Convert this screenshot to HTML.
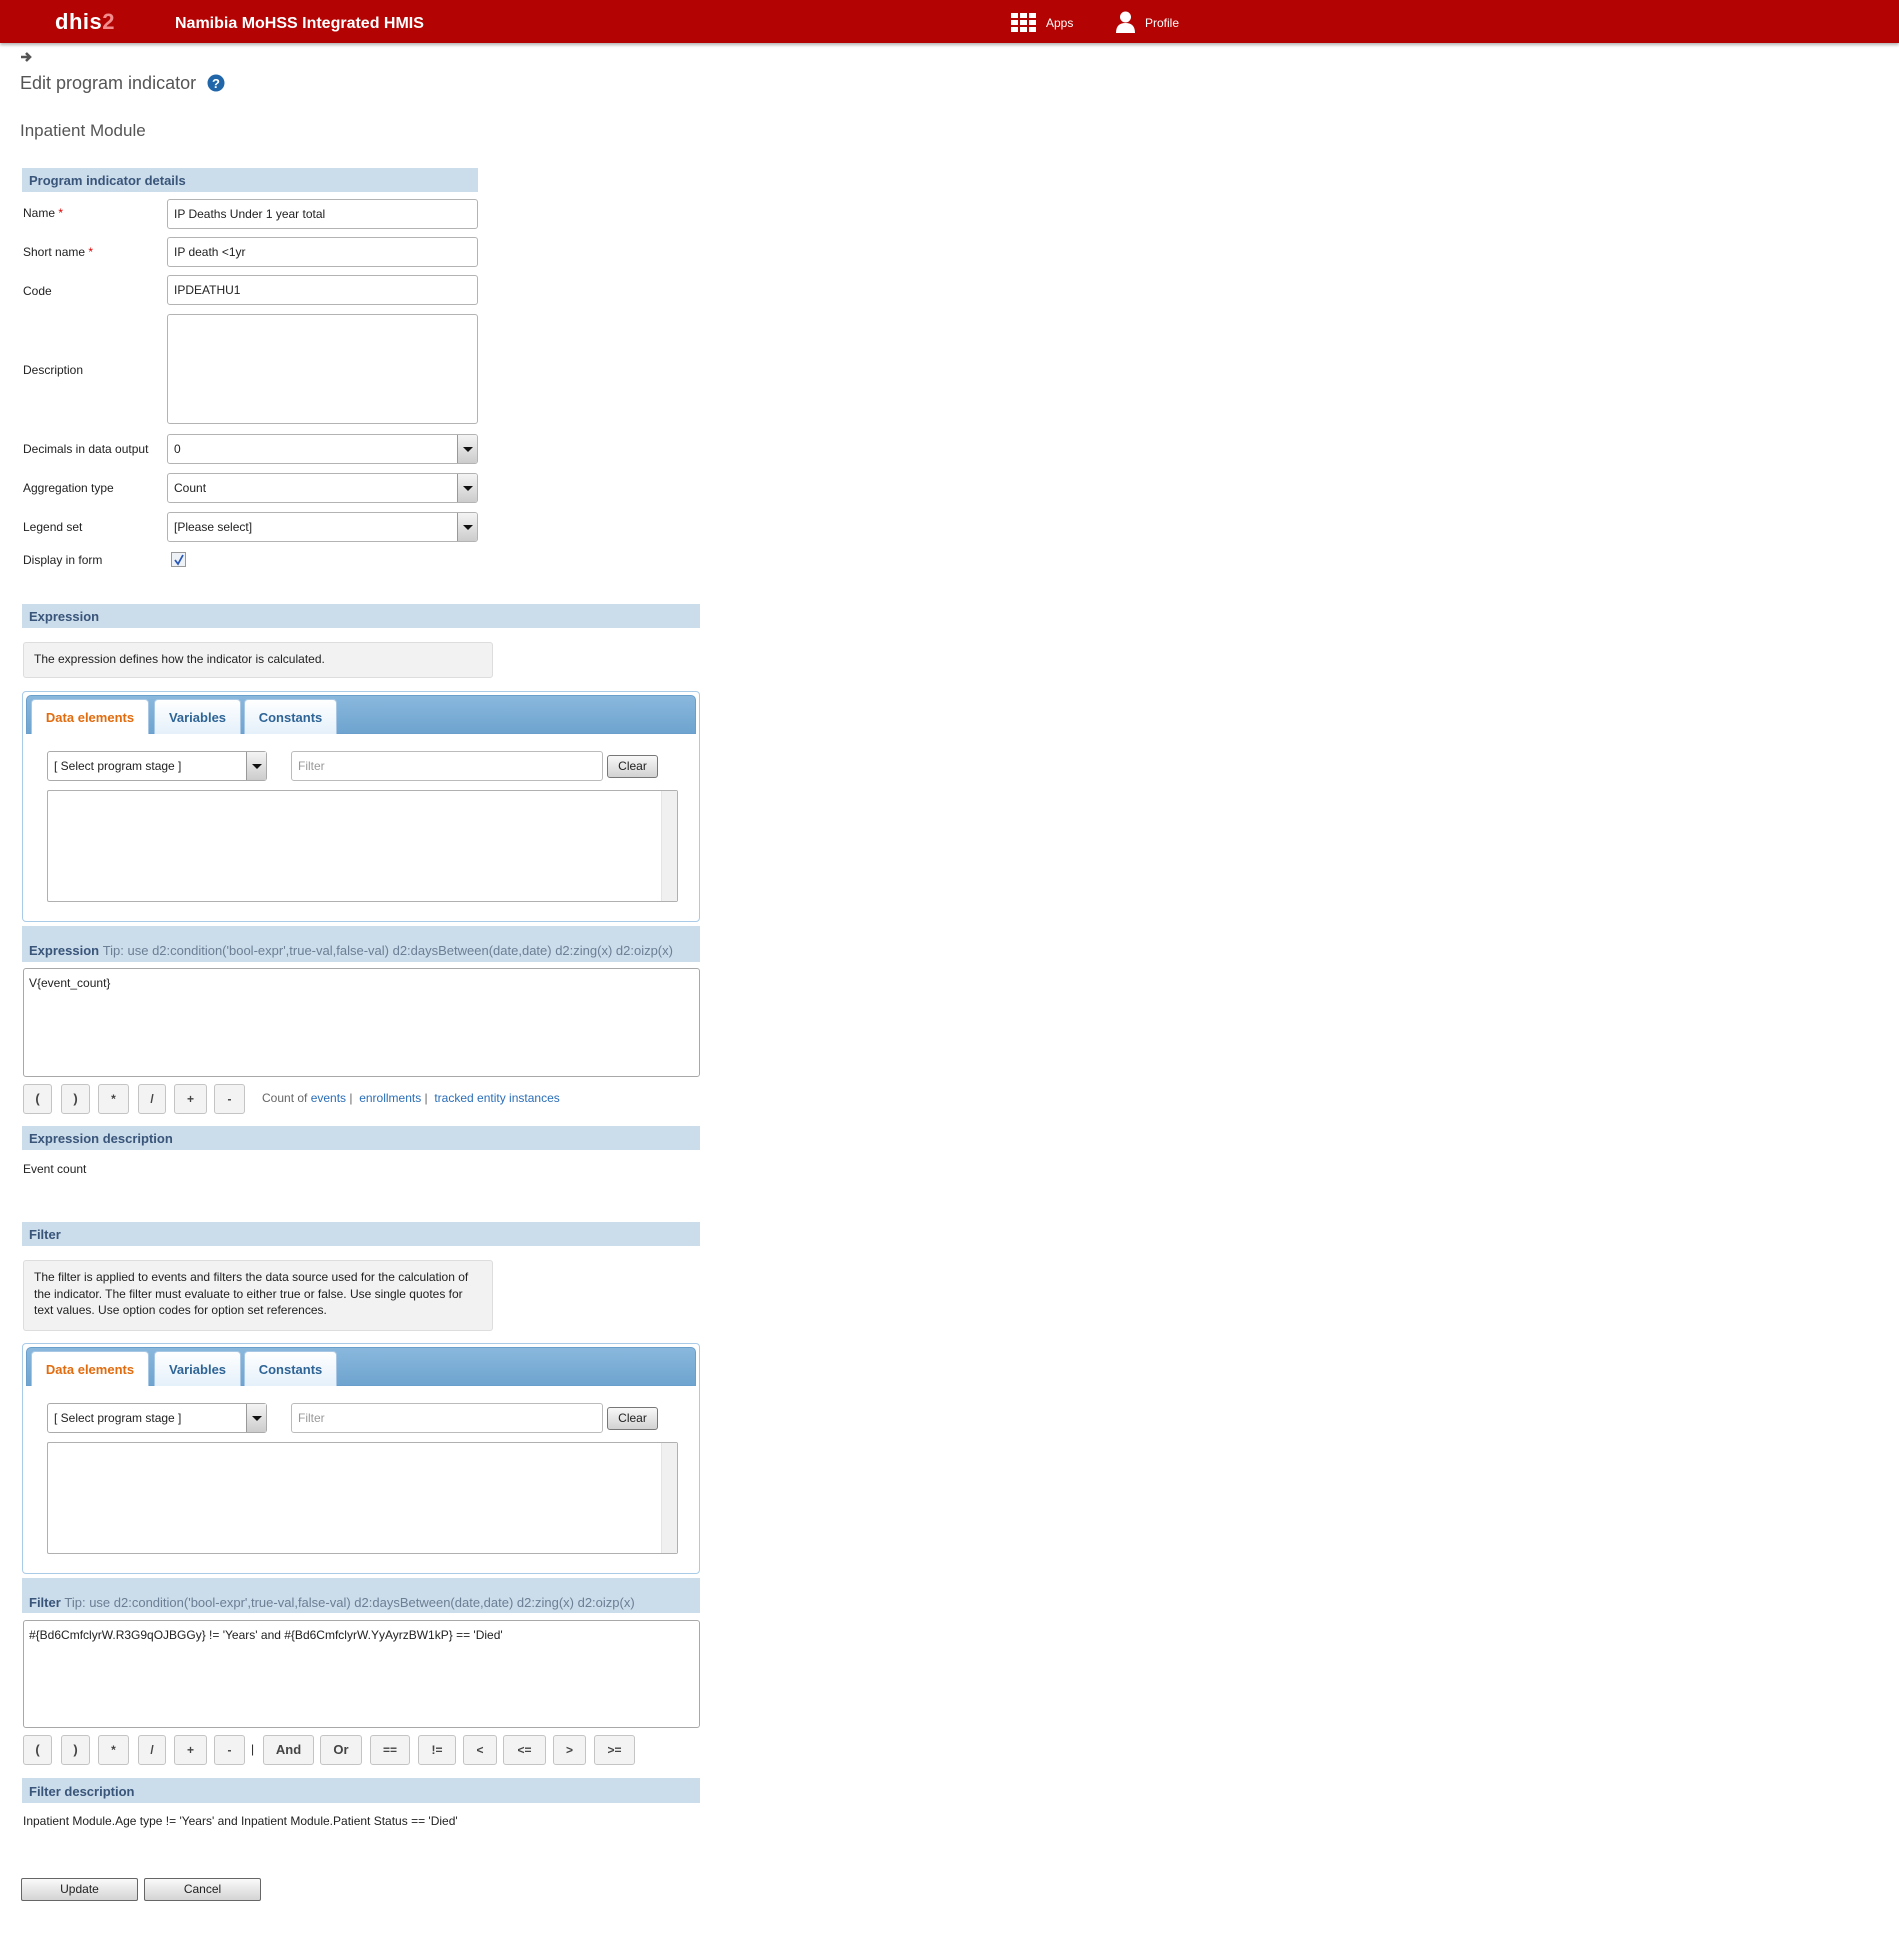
<!DOCTYPE html>
<html><head><meta charset="utf-8"><style>
*{box-sizing:border-box;margin:0;padding:0}
body{width:1899px;height:1934px;background:#fff;font-family:"Liberation Sans",Arial,sans-serif;font-size:12px;color:#222;position:relative;overflow:hidden}
.a{position:absolute}
.hdr{left:0;top:0;width:1899px;height:43px;background:#b40303;box-shadow:0 2px 3px rgba(0,0,0,.3)}
.sec{position:absolute;left:22px;background:#cbdcea;color:#39557a;font-weight:bold;font-size:13px;padding-left:7px}
.lbl{position:absolute;left:23px;font-size:12px}
.inp{position:absolute;left:167px;width:311px;background:#fff;border:1px solid #b3b3b3;border-radius:3px;padding-left:6px;font-size:12px;line-height:28px}
.sel .arr{position:absolute;right:0;top:0;bottom:0;width:20px;border-left:1px solid #999;background:linear-gradient(#f4f4f4,#ccc);border-radius:0 2px 2px 0}
.arr:after{content:"";position:absolute;left:5px;top:12px;border-left:5px solid transparent;border-right:5px solid transparent;border-top:5px solid #111}
.info{position:absolute;left:23px;width:470px;background:#f2f2f2;border:1px solid #ddd;border-radius:3px;padding:8px 10px;font-size:12px;line-height:16.5px;color:#222}
.tabc{position:absolute;left:22px;width:678px;height:231px;border:1px solid #a9cbe8;border-radius:4px;background:#fff}
.tbar{position:absolute;left:3px;top:3px;width:670px;height:39px;border-radius:5px 5px 0 0;background:linear-gradient(#8ab8dd,#6ea4cf);border:1px solid #6b9fcb}
.tab{position:absolute;top:7px;height:35px;background:linear-gradient(#fff,#e4f0fa);border:1px solid #a8c7e4;border-bottom:none;border-radius:4px 4px 0 0;font-weight:bold;font-size:13px;color:#2e6496;text-align:center;line-height:36px}
.tab.on{background:#fff;color:#e26b0e}
.ss{position:absolute;left:24px;top:59px;width:220px;height:30px;border:1px solid #aaa;border-radius:3px;padding-left:6px;line-height:28px}
.flt{position:absolute;left:268px;top:59px;width:312px;height:30px;border:1px solid #bbb;border-radius:3px;padding-left:6px;line-height:28px;color:#999}
.clr{position:absolute;left:584px;top:63px;width:51px;height:23px;border:1px solid #777;border-radius:3px;background:linear-gradient(#f8f8f8,#d2d2d2);text-align:center;line-height:21px}
.lst{position:absolute;left:24px;top:98px;width:631px;height:112px;border:1px solid #b0b0b0;border-radius:2px}
.lst .sb{position:absolute;right:0;top:0;bottom:0;width:16px;background:#f0f0f0;border-left:1px solid #e4e4e4}
.ta{position:absolute;left:23px;width:677px;height:109px;border:1px solid #a8a8a8;border-radius:3px;padding:7px 5px;font-size:12px}
.b{position:absolute;height:30px;border:1px solid #c4c4c4;border-radius:3px;background:#f3f3f3;text-align:center;line-height:28px;font-weight:bold;color:#444;font-size:12px}
.b.big{font-size:13px}
.btn{position:absolute;top:1878px;width:117px;height:23px;border:1px solid #666;border-radius:2px;background:linear-gradient(#fafafa,#d4d4d4);text-align:center;line-height:21px;font-size:12px}
a{color:#2a6eb8;text-decoration:none}
.req{color:#d00}
</style></head><body>
<div class="a hdr"></div>
<div class="a" style="left:55px;top:9px;font-size:22px;font-weight:bold;color:#fff;letter-spacing:.5px">dhis<span style="color:#f28c8c">2</span></div>
<div class="a" style="left:175px;top:15px;font-size:16px;font-weight:bold;color:#fff">Namibia MoHSS Integrated HMIS</div>
<svg class="a" style="left:1011px;top:13px" width="26" height="19"><g fill="#fff"><rect x="0" y="0" width="7" height="5"/><rect x="9" y="0" width="7" height="5"/><rect x="18" y="0" width="7" height="5"/><rect x="0" y="7" width="7" height="5"/><rect x="9" y="7" width="7" height="5"/><rect x="18" y="7" width="7" height="5"/><rect x="0" y="14" width="7" height="5"/><rect x="9" y="14" width="7" height="5"/><rect x="18" y="14" width="7" height="5"/></g></svg>
<div class="a" style="left:1046px;top:16px;color:#fff;font-size:12px">Apps</div>
<svg class="a" style="left:1115px;top:11px" width="21" height="22"><circle cx="10.5" cy="6" r="5.5" fill="#fff"/><path d="M1 22 Q1 12 10.5 12 Q20 12 20 22Z" fill="#fff"/></svg>
<div class="a" style="left:1145px;top:16px;color:#fff;font-size:12px">Profile</div>

<svg class="a" style="left:20px;top:51px" width="14" height="12"><path d="M1 6H10M6 2L10 6L6 10" stroke="#555" stroke-width="2.6" fill="none"/></svg>
<div class="a" style="left:20px;top:73px;font-size:18px;color:#555">Edit program indicator</div>
<svg class="a" style="left:207px;top:74px" width="18" height="18"><circle cx="9" cy="9" r="8.5" fill="#2066a8"/><text x="9" y="14" text-anchor="middle" font-family="Liberation Sans" font-weight="bold" font-size="13" fill="#fff">?</text></svg>
<div class="a" style="left:20px;top:121px;font-size:17px;color:#555">Inpatient Module</div>

<div class="sec" style="top:168px;width:456px;height:24px;line-height:25px">Program indicator details</div>
<div class="lbl" style="top:206px">Name <span class="req">*</span></div>
<div class="inp" style="top:199px;height:30px">IP Deaths Under 1 year total</div>
<div class="lbl" style="top:245px">Short name <span class="req">*</span></div>
<div class="inp" style="top:237px;height:30px">IP death &lt;1yr</div>
<div class="lbl" style="top:284px">Code</div>
<div class="inp" style="top:275px;height:30px">IPDEATHU1</div>
<div class="lbl" style="top:363px">Description</div>
<div class="inp" style="top:314px;height:110px"></div>
<div class="lbl" style="top:442px">Decimals in data output</div>
<div class="inp sel" style="top:434px;height:30px">0<span class="arr"></span></div>
<div class="lbl" style="top:481px">Aggregation type</div>
<div class="inp sel" style="top:473px;height:30px">Count<span class="arr"></span></div>
<div class="lbl" style="top:520px">Legend set</div>
<div class="inp sel" style="top:512px;height:30px">[Please select]<span class="arr"></span></div>
<div class="lbl" style="top:553px">Display in form</div>
<div class="a" style="left:171px;top:552px;width:15px;height:15px;border:1px solid #999;background:#eef2f7"><svg width="13" height="13" style="position:absolute;left:0;top:0"><path d="M3 7L6 11L11 2" stroke="#2a58b8" stroke-width="1.8" fill="none"/></svg></div>

<div class="sec" style="top:604px;width:678px;height:24px;line-height:25px">Expression</div>
<div class="info" style="top:642px;height:36px">The expression defines how the indicator is calculated.</div>
<div class="tabc" style="top:691px">
 <div class="tbar"></div>
 <div class="tab on" style="left:8px;width:118px">Data elements</div>
 <div class="tab" style="left:131px;width:87px">Variables</div>
 <div class="tab" style="left:221px;width:93px">Constants</div>
 <div class="ss">[ Select program stage ]<span class="arr" style="position:absolute;right:0;top:0;bottom:0;width:20px;border-left:1px solid #999;background:linear-gradient(#f4f4f4,#ccc)"></span></div>
 <div class="flt">Filter</div>
 <div class="clr">Clear</div>
 <div class="lst"><div class="sb"></div></div>
</div>
<div class="sec" style="top:926px;width:678px;height:36px;padding-top:17px;font-size:13px">Expression <span style="font-weight:normal;color:#6b7f95">Tip: use d2:condition('bool-expr',true-val,false-val) d2:daysBetween(date,date) d2:zing(x) d2:oizp(x)</span></div>
<div class="ta" style="top:968px">V{event_count}</div>
<div class="b big" style="left:23px;top:1084px;width:29px">(</div>
<div class="b big" style="left:61px;top:1084px;width:29px">)</div>
<div class="b" style="left:98px;top:1084px;width:31px">*</div>
<div class="b" style="left:138px;top:1084px;width:28px">/</div>
<div class="b" style="left:174px;top:1084px;width:33px">+</div>
<div class="b" style="left:214px;top:1084px;width:31px">-</div>
<div class="a" style="left:262px;top:1091px;color:#666">Count of <a>events</a> | &nbsp;<a>enrollments</a> | &nbsp;<a>tracked entity instances</a></div>

<div class="sec" style="top:1126px;width:678px;height:24px;line-height:26px">Expression description</div>
<div class="a" style="left:23px;top:1162px">Event count</div>

<div class="sec" style="top:1222px;width:678px;height:24px;line-height:26px">Filter</div>
<div class="info" style="top:1260px;height:71px">The filter is applied to events and filters the data source used for the calculation of the indicator. The filter must evaluate to either true or false. Use single quotes for text values. Use option codes for option set references.</div>
<div class="tabc" style="top:1343px">
 <div class="tbar"></div>
 <div class="tab on" style="left:8px;width:118px">Data elements</div>
 <div class="tab" style="left:131px;width:87px">Variables</div>
 <div class="tab" style="left:221px;width:93px">Constants</div>
 <div class="ss">[ Select program stage ]<span class="arr" style="position:absolute;right:0;top:0;bottom:0;width:20px;border-left:1px solid #999;background:linear-gradient(#f4f4f4,#ccc)"></span></div>
 <div class="flt">Filter</div>
 <div class="clr">Clear</div>
 <div class="lst"><div class="sb"></div></div>
</div>
<div class="sec" style="top:1578px;width:678px;height:35px;padding-top:17px;font-size:13px">Filter <span style="font-weight:normal;color:#6b7f95">Tip: use d2:condition('bool-expr',true-val,false-val) d2:daysBetween(date,date) d2:zing(x) d2:oizp(x)</span></div>
<div class="ta" style="top:1620px;height:108px">#{Bd6CmfclyrW.R3G9qOJBGGy} != 'Years' and #{Bd6CmfclyrW.YyAyrzBW1kP} == 'Died'</div>
<div class="b big" style="left:23px;top:1735px;width:29px">(</div>
<div class="b big" style="left:61px;top:1735px;width:29px">)</div>
<div class="b" style="left:98px;top:1735px;width:31px">*</div>
<div class="b" style="left:138px;top:1735px;width:28px">/</div>
<div class="b" style="left:174px;top:1735px;width:33px">+</div>
<div class="b" style="left:214px;top:1735px;width:31px">-</div>
<div class="a" style="left:251px;top:1742px">|</div>
<div class="b big" style="left:263px;top:1735px;width:51px">And</div>
<div class="b big" style="left:320px;top:1735px;width:42px">Or</div>
<div class="b" style="left:370px;top:1735px;width:40px">==</div>
<div class="b" style="left:418px;top:1735px;width:38px">!=</div>
<div class="b" style="left:463px;top:1735px;width:34px">&lt;</div>
<div class="b" style="left:503px;top:1735px;width:43px">&lt;=</div>
<div class="b" style="left:553px;top:1735px;width:33px">&gt;</div>
<div class="b" style="left:594px;top:1735px;width:41px">&gt;=</div>

<div class="sec" style="top:1778px;width:678px;height:25px;line-height:27px">Filter description</div>
<div class="a" style="left:23px;top:1814px">Inpatient Module.Age type != 'Years' and Inpatient Module.Patient Status == 'Died'</div>

<div class="btn" style="left:21px">Update</div>
<div class="btn" style="left:144px">Cancel</div>
</body></html>
